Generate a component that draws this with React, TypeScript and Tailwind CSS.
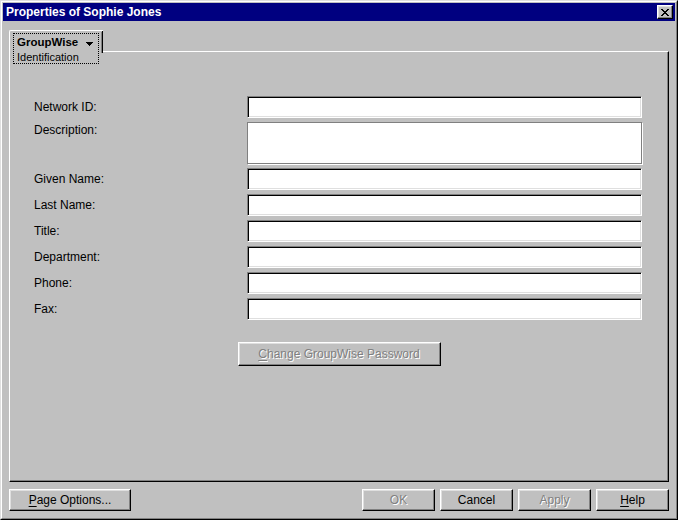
import React from "react";

const raised =
  "border border-t-white border-l-white border-r-black border-b-black shadow-[inset_-1px_-1px_0_#808080,inset_1px_1px_0_#dfdfdf]";
const sunken =
  "border border-t-[#808080] border-l-[#808080] border-r-white border-b-white shadow-[inset_1px_1px_0_#000,inset_-1px_-1px_0_#dfdfdf]";
const disabledText = "text-[#808080] [text-shadow:1px_1px_0_#fff]";

const fields = ["Network ID:", "Description:", "Given Name:", "Last Name:", "Title:", "Department:", "Phone:", "Fax:"];

function CloseGlyph() {
  const rows = [
    [0, 6],
    [1, 5],
    [2, 4],
    [3],
    [2, 4],
    [1, 5],
    [0, 6],
  ];
  return (
    <svg width="8" height="7" viewBox="0 0 8 7" shapeRendering="crispEdges" aria-hidden="true">
      {rows.map((xs, y) =>
        xs.map((x) => <rect key={`${y}-${x}`} x={x} y={y} width="2" height="1" fill="#000" />)
      )}
    </svg>
  );
}

function Field({ label }: { label: string }) {
  const tall = label === "Description:";
  return (
    <>
      <div className={tall ? "self-start pt-px leading-[14px]" : "self-center leading-[14px]"}>{label}</div>
      {tall ? (
        <textarea
          readOnly
          className="h-[42px] w-[395px] resize-none border border-[#808080] bg-white shadow-[1px_1px_0_#fff] outline-none"
        />
      ) : (
        <input type="text" readOnly className={`h-[22px] w-[395px] bg-white outline-none ${sunken}`} />
      )}
    </>
  );
}

export default function App() {
  return (
    <div className="h-[520px] w-[678px] border border-t-[#dfdfdf] border-l-[#dfdfdf] border-r-black border-b-black bg-[#c0c0c0] font-['Liberation_Sans',Arial,sans-serif] text-[12px] text-black">
      <div className="flex h-full flex-col border border-t-white border-l-white border-r-[#808080] border-b-[#808080] p-px">
        <div className="flex h-[18px] items-center justify-between bg-[#000080] pl-[3px] pr-[2px]">
          <span className="text-[12px] font-bold text-white">Properties of Sophie Jones</span>
          <button type="button" className={`flex h-[14px] w-[16px] items-center justify-center bg-[#c0c0c0] ${raised}`}>
            <CloseGlyph />
          </button>
        </div>

        <div className="flex flex-1 flex-col px-[6px] pb-[6px] pt-[30px]">
          <section className="relative flex flex-1 flex-col border border-t-white border-l-white border-r-black border-b-black shadow-[inset_-1px_-1px_0_#808080]">
            <div className="absolute -left-px -top-[22px] h-[38px] w-[94px] rounded-tl-[2px] border-l border-t border-white bg-[#c0c0c0] pl-[3px] pt-[2px]">
              <div className="absolute right-0 top-0 h-[22px] w-px bg-black" />
              <div className="absolute right-px top-px h-[21px] w-px bg-[#808080]" />
              <div className="h-[31px] w-[86px] border border-dotted border-black pl-[3px]">
                <div className="flex h-[15px] items-end justify-between pr-[5px]">
                  <span className="text-[11.5px] font-bold leading-[13px]">GroupWise</span>
                  <svg width="7" height="4" viewBox="0 0 7 4" className="mb-[3px]" shapeRendering="crispEdges" aria-hidden="true">
                    <path d="M0 0h7L3.5 4z" fill="#000" />
                  </svg>
                </div>
                <div className="pt-[2px] text-[11px] leading-[13px]">Identification</div>
              </div>
            </div>

            <div className="grid grid-cols-[213px_395px] gap-y-[4px] pl-[24px] pt-[44px]">
              {fields.map((f) => (
                <Field key={f} label={f} />
              ))}
            </div>

            <div className="mt-[22px] flex justify-center">
              <button type="button" className={`h-[24px] w-[203px] bg-[#c0c0c0] ${raised} ${disabledText}`}>
                <span className="underline underline-offset-2">C</span>hange GroupWise Password
              </button>
            </div>
          </section>

          <div className="mt-[7px] flex h-[22px] items-stretch">
            <button type="button" className={`w-[122px] bg-[#c0c0c0] ${raised}`}>
              <span className="underline underline-offset-2">P</span>age Options...
            </button>
            <div className="ml-auto flex gap-[5px]">
              <button type="button" className={`w-[73px] bg-[#c0c0c0] ${raised} ${disabledText}`}>
                OK
              </button>
              <button type="button" className={`w-[73px] bg-[#c0c0c0] ${raised}`}>
                Cancel
              </button>
              <button type="button" className={`w-[73px] bg-[#c0c0c0] ${raised} ${disabledText}`}>
                Apply
              </button>
              <button type="button" className={`w-[73px] bg-[#c0c0c0] ${raised}`}>
                <span className="underline underline-offset-2">H</span>elp
              </button>
            </div>
          </div>
        </div>
      </div>
    </div>
  );
}
